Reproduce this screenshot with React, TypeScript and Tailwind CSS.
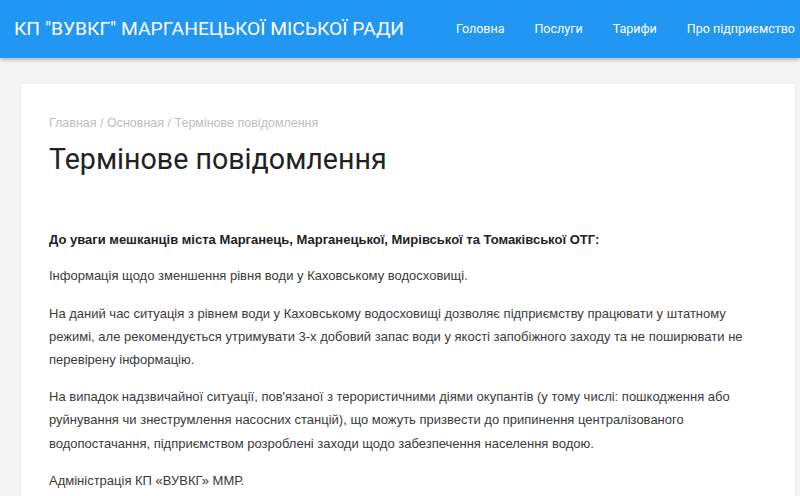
export default function App() {
  return (
    <div className="min-h-[496px] w-[800px] overflow-hidden bg-[#f4f4f4]">
      <header className="relative z-10 flex h-[58px] items-center justify-between bg-[#2196f3] pl-[14px] shadow-[0_2px_4px_rgba(0,0,0,0.25)]">
        <div className="whitespace-nowrap font-['Roboto'] text-[19.25px] text-white">
          КП "ВУВКГ" МАРГАНЕЦЬКОЇ МІСЬКОЇ РАДИ
        </div>
        <nav className="flex items-center gap-[30px] whitespace-nowrap pr-[5px] font-['Roboto'] text-[12.5px] text-white">
          <span>Головна</span>
          <span>Послуги</span>
          <span>Тарифи</span>
          <span>Про підприємство</span>
        </nav>
      </header>
      <main className="pl-[21px] pr-[5px] pt-[26px]">
        <div className="bg-white px-[28px] pb-[20px] pt-[30px] shadow-[0_1px_3px_rgba(0,0,0,0.08)]">
          <div className="font-['Liberation_Sans',Arial,sans-serif] text-[12.5px] text-[#bdbdbd]">
            Главная / Основная / Термінове повідомлення
          </div>
          <h1 className="mt-[8px] font-['Roboto'] text-[28.6px] leading-[36px] text-[#222]">
            Термінове повідомлення
          </h1>
          <div className="mt-[51px] font-['Liberation_Sans',Arial,sans-serif] text-[13px] leading-[23.4px] text-[#3a3a3a]">
            <p className="font-bold text-[#222]">
              До уваги мешканців міста Марганець, Марганецької, Мирівської та Томаківської ОТГ:
            </p>
            <p className="mt-[13px]">Інформація щодо зменшення рівня води у Каховському водосховищі.</p>
            <p className="mt-[14px]">
              На даний час ситуація з рівнем води у Каховському водосховищі дозволяє підприємству працювати у штатному режимі, але рекомендується утримувати 3-х добовий запас води у якості запобіжного заходу та не поширювати не перевірену інформацію.
            </p>
            <p className="mt-[13px]">
              На випадок надзвичайної ситуації, пов'язаної з терористичними діями окупантів (у тому числі: пошкодження або руйнування чи знеструмлення насосних станцій), що можуть призвести до припинення централізованого водопостачання, підприємством розроблені заходи щодо забезпечення населення водою.
            </p>
            <p className="mt-[14px]">Адміністрація КП «ВУВКГ» ММР.</p>
          </div>
        </div>
      </main>
    </div>
  );
}
